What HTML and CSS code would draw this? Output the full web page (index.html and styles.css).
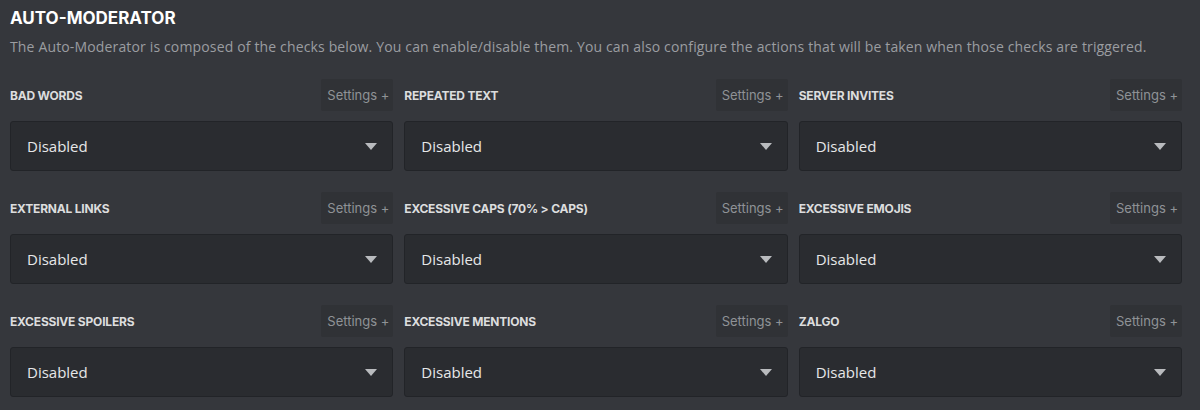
FILE: index.html
```html
<!DOCTYPE html>
<html>
<head>
<meta charset="utf-8">
<link rel="stylesheet" href="styles.css">
</head>
<body>
<div class="page">
  <h2 class="title">AUTO-MODERATOR</h2>
  <p class="desc">The Auto-Moderator is composed of the checks below. You can enable/disable them. You can also configure the actions that will be taken when those checks are triggered.</p>
  <div class="grid">
    <div class="check">
      <div class="head"><span class="label">Bad Words</span><button class="settings">Settings +</button></div>
      <div class="select"><span>Disabled</span><i class="caret"></i></div>
    </div>
    <div class="check">
      <div class="head"><span class="label">Repeated Text</span><button class="settings">Settings +</button></div>
      <div class="select"><span>Disabled</span><i class="caret"></i></div>
    </div>
    <div class="check">
      <div class="head"><span class="label">Server Invites</span><button class="settings">Settings +</button></div>
      <div class="select"><span>Disabled</span><i class="caret"></i></div>
    </div>
    <div class="check">
      <div class="head"><span class="label">External Links</span><button class="settings">Settings +</button></div>
      <div class="select"><span>Disabled</span><i class="caret"></i></div>
    </div>
    <div class="check">
      <div class="head"><span class="label">Excessive Caps (70% &gt; Caps)</span><button class="settings">Settings +</button></div>
      <div class="select"><span>Disabled</span><i class="caret"></i></div>
    </div>
    <div class="check">
      <div class="head"><span class="label">Excessive Emojis</span><button class="settings">Settings +</button></div>
      <div class="select"><span>Disabled</span><i class="caret"></i></div>
    </div>
    <div class="check">
      <div class="head"><span class="label">Excessive Spoilers</span><button class="settings">Settings +</button></div>
      <div class="select"><span>Disabled</span><i class="caret"></i></div>
    </div>
    <div class="check">
      <div class="head"><span class="label">Excessive Mentions</span><button class="settings">Settings +</button></div>
      <div class="select"><span>Disabled</span><i class="caret"></i></div>
    </div>
    <div class="check">
      <div class="head"><span class="label">Zalgo</span><button class="settings">Settings +</button></div>
      <div class="select"><span>Disabled</span><i class="caret"></i></div>
    </div>
  </div>
</div>
</body>
</html>
```
FILE: styles.css
```css
html, body {
  margin: 0;
  padding: 0;
  background: #35373c;
}
.page {
  padding: 7px 18px 0 10px;
  font-family: "Open Sans", "Liberation Sans", sans-serif;
}
.title {
  margin: 0;
  font-family: Inter, "Liberation Sans", sans-serif;
  font-weight: 700;
  font-size: 17px;
  line-height: 22px;
  color: #ffffff;
}
.desc {
  margin: 8px 0 0 0;
  font-size: 14px;
  line-height: 20px;
  color: #9b9da1;
  letter-spacing: 0.15px;
}
.grid {
  margin-top: 22px;
  display: grid;
  grid-template-columns: repeat(3, 1fr);
  column-gap: 11px;
  row-gap: 21px;
}
.head {
  display: flex;
  justify-content: space-between;
  align-items: center;
  height: 32px;
}
.label {
  font-family: Inter, "Liberation Sans", sans-serif;
  font-weight: 700;
  font-size: 12px;
  text-transform: uppercase;
  color: #dcddde;
  letter-spacing: -0.2px;
}
.settings {
  height: 32px;
  padding: 0 4px 0 6px;
  border: none;
  border-radius: 2px;
  background: #303236;
  color: #8f9296;
  font-family: Inter, "Liberation Sans", sans-serif;
  font-size: 13px;
  cursor: pointer;
}
.select {
  margin-top: 10px;
  height: 50px;
  box-sizing: border-box;
  border: 1px solid #222428;
  border-radius: 3px;
  background: #2a2c30;
  display: flex;
  align-items: center;
  justify-content: space-between;
  padding: 0 15px 0 16px;
  color: #e6e7e8;
  font-size: 15px;
}
.caret {
  width: 0;
  height: 0;
  border-left: 6px solid transparent;
  border-right: 6px solid transparent;
  border-top: 7px solid #b9bbbe;
}
```
